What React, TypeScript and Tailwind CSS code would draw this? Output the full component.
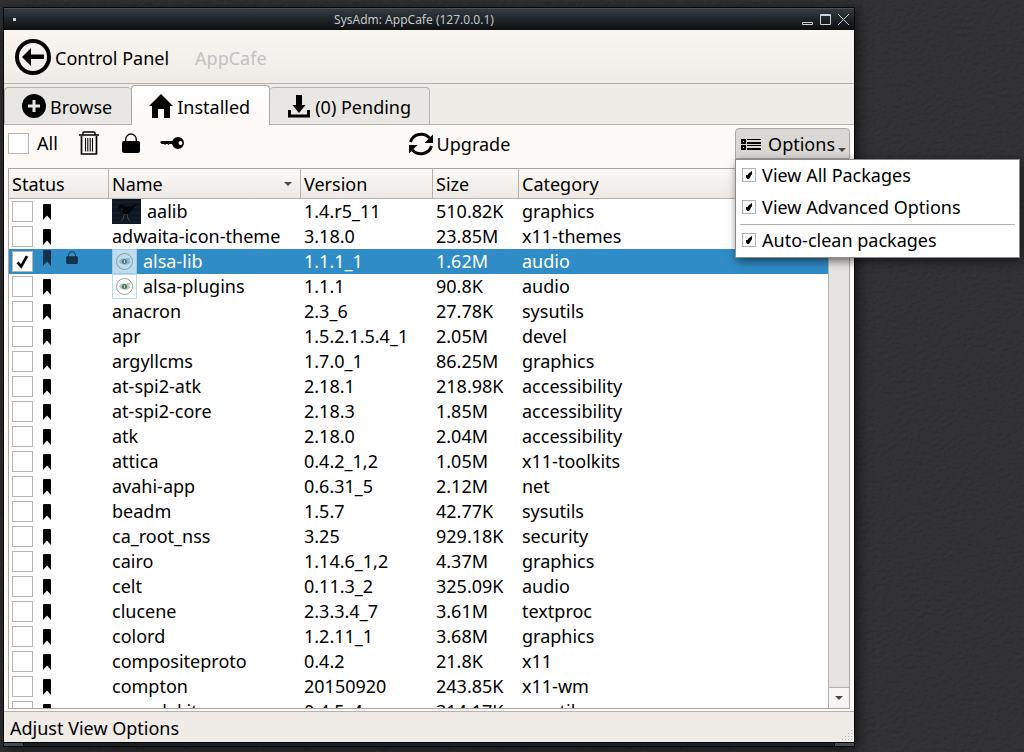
import React from "react";

type Pkg = {
  name: string;
  version: string;
  size: string;
  category: string;
  art?: "bird" | "alsa";
  locked?: boolean;
};

const packages: Pkg[] = [
  { name: "aalib", version: "1.4.r5_11", size: "510.82K", category: "graphics", art: "bird" },
  { name: "adwaita-icon-theme", version: "3.18.0", size: "23.85M", category: "x11-themes" },
  { name: "alsa-lib", version: "1.1.1_1", size: "1.62M", category: "audio", art: "alsa", locked: true },
  { name: "alsa-plugins", version: "1.1.1", size: "90.8K", category: "audio", art: "alsa" },
  { name: "anacron", version: "2.3_6", size: "27.78K", category: "sysutils" },
  { name: "apr", version: "1.5.2.1.5.4_1", size: "2.05M", category: "devel" },
  { name: "argyllcms", version: "1.7.0_1", size: "86.25M", category: "graphics" },
  { name: "at-spi2-atk", version: "2.18.1", size: "218.98K", category: "accessibility" },
  { name: "at-spi2-core", version: "2.18.3", size: "1.85M", category: "accessibility" },
  { name: "atk", version: "2.18.0", size: "2.04M", category: "accessibility" },
  { name: "attica", version: "0.4.2_1,2", size: "1.05M", category: "x11-toolkits" },
  { name: "avahi-app", version: "0.6.31_5", size: "2.12M", category: "net" },
  { name: "beadm", version: "1.5.7", size: "42.77K", category: "sysutils" },
  { name: "ca_root_nss", version: "3.25", size: "929.18K", category: "security" },
  { name: "cairo", version: "1.14.6_1,2", size: "4.37M", category: "graphics" },
  { name: "celt", version: "0.11.3_2", size: "325.09K", category: "audio" },
  { name: "clucene", version: "2.3.3.4_7", size: "3.61M", category: "textproc" },
  { name: "colord", version: "1.2.11_1", size: "3.68M", category: "graphics" },
  { name: "compositeproto", version: "0.4.2", size: "21.8K", category: "x11" },
  { name: "compton", version: "20150920", size: "243.85K", category: "x11-wm" },
  { name: "consolekit", version: "0.4.5_4", size: "314.17K", category: "sysutils" },
];

function Wallpaper() {
  return (
    <svg aria-hidden="true" className="pointer-events-none absolute inset-0 h-full w-full">
      <filter id="leather" x="0" y="0" width="100%" height="100%">
        <feTurbulence type="fractalNoise" baseFrequency="0.2 0.28" numOctaves="3" seed="7" result="n" />
        <feDiffuseLighting in="n" surfaceScale="0.45" lightingColor="#38393b">
          <feDistantLight azimuth="235" elevation="52" />
        </feDiffuseLighting>
      </filter>
      <rect width="100%" height="100%" filter="url(#leather)" />
    </svg>
  );
}

function BackIcon() {
  return (
    <svg width="36" height="36" viewBox="0 0 36 36" aria-hidden="true">
      <circle cx="18" cy="18" r="16" fill="none" stroke="#000" strokeWidth="4" />
      <path d="M7 18L16 9V15.500H29V20H16V27Z" />
    </svg>
  );
}

function PlusIcon() {
  return (
    <svg width="24" height="24" viewBox="0 0 24 24" aria-hidden="true">
      <circle cx="12" cy="12" r="12" />
      <path d="M12 6V18M6 12H18" stroke="#e8e7e4" strokeWidth="3" />
    </svg>
  );
}

function HomeIcon() {
  return (
    <svg width="24" height="24" viewBox="0 0 24 24" aria-hidden="true">
      <path d="M12 0L24 12H21V24H15V15H9V24H3V12H0Z" />
    </svg>
  );
}

function DownloadIcon() {
  return (
    <svg width="22" height="24" viewBox="0 0 22 24" aria-hidden="true">
      <path d="M8 1H14V11H17.500L11 19L4.500 11H8Z" />
      <path d="M0 16H3V20.500H19V16H22V23.500H0Z" />
    </svg>
  );
}

function TrashIcon() {
  return (
    <svg width="20" height="24" viewBox="0 0 20 24" fill="none" stroke="#000" aria-hidden="true">
      <path d="M0 4H20" strokeWidth="1.500" />
      <path d="M4 4V2Q4 1 5 1H15Q16 1 16 2V4" strokeWidth="1.500" />
      <path d="M2.500 5V23H17.500V5" strokeWidth="1.700" strokeLinejoin="round" />
      <path d="M6.500 7V20.500M8.800 7V20.500M11.200 7V20.500M13.500 7V20.500" strokeWidth="1.100" />
    </svg>
  );
}

function LockIcon({ className }: { className: string }) {
  return (
    <svg viewBox="0 0 18 20" className={className} aria-hidden="true">
      <path d="M3.700 10V6.500A5.300 5.500 0 0 1 14.300 6.500V10" fill="none" stroke="currentColor" strokeWidth="1.400" />
      <path d="M2 8H16Q18 8 18 10V17.500Q18 20 15.500 20H2.500Q0 20 0 17.500V10Q0 8 2 8Z" fill="currentColor" />
    </svg>
  );
}

function KeyIcon() {
  return (
    <svg width="24" height="14" viewBox="0 0 24 14" aria-hidden="true">
      <path d="M0 6L1.500 5H13V8H9.500L8.500 9L7.500 8H6L5 9L4 8H1.500Z" />
      <path
        fillRule="evenodd"
        d="M18 1A6 6 0 1 0 18 13A6 6 0 1 0 18 1ZM20.500 5A2 2 0 1 1 20.500 9A2 2 0 1 1 20.500 5Z"
      />
    </svg>
  );
}

function RefreshIcon() {
  return (
    <svg width="24" height="24" viewBox="0 0 24 24" aria-hidden="true">
      <path d="M1.500 10A11 10.500 0 0 1 20.500 6M22.500 14A11 10.500 0 0 1 3.500 18" fill="none" stroke="#000" strokeWidth="3" />
      <path d="M24 2.500V11H15.500Z" />
      <path d="M0 21.500V13H8.500Z" />
    </svg>
  );
}

function ListIcon() {
  return (
    <svg width="20" height="12" viewBox="0 0 20 12" shapeRendering="crispEdges" aria-hidden="true">
      <path d="M0 1H5V6H0ZM2 3V4H3V3ZM0 7H5V12H0ZM2 9V10H3V9Z" fillRule="evenodd" />
      <path d="M6 1H20V2H6ZM6 4H20V6H6ZM6 7H20V8H6ZM6 10H20V12H6Z" />
    </svg>
  );
}

function Bookmark({ dim }: { dim?: boolean }) {
  return (
    <svg
      width="8"
      height="16"
      viewBox="0 0 8 16"
      className={dim ? "mb-2 text-[#12314a]" : "text-black"}
      aria-hidden="true"
    >
      <path d="M0 1Q0 0 1 0H7Q8 0 8 1V16L4 11.500L0 16Z" fill="currentColor" />
    </svg>
  );
}

function Triangle({ className }: { className: string }) {
  return (
    <svg viewBox="0 0 8 4" className={className} aria-hidden="true">
      <path d="M0 0H8L4 4Z" fill="currentColor" />
    </svg>
  );
}

function BirdArt() {
  return (
    <svg width="29" height="25" viewBox="0 0 29 25" className="mr-1.5" aria-hidden="true">
      <rect width="29" height="25" fill="#0d1720" />
      <path d="M0 3H29M0 8H29M0 14H8M19 14H29M0 19H29M0 23H29" stroke="#172531" />
      <path d="M6 8L8 6L11 6L14 8L20 7L25 4L21 10L16 15L12 15L9 12Z" fill="#030405" />
      <path d="M8 9L11 10L10 12Z" fill="#5a2010" />
      <path d="M12.500 15L11 20L9 22M15 15L16 20L18 22" stroke="#51473c" fill="none" />
    </svg>
  );
}

function AlsaArt({ selected }: { selected?: boolean }) {
  return (
    <svg width="25" height="25" viewBox="0 0 25 25" className="mr-1.5" aria-hidden="true">
      <rect x=".5" y=".5" width="24" height="24" fill={selected ? "#bfdbed" : "#fff"} stroke={selected ? "#9fcbe2" : "#b4dde6"} />
      <circle cx="12.500" cy="12.500" r="8" fill="none" stroke={selected ? "#7d9fb0" : "#9aa3a1"} />
      <path d="M7 12Q9 8.500 13 9.500L18 9L17 12L19 13Q16 16.500 12 15.500Q8 15.500 7 12Z" fill={selected ? "#8fb5c0" : "#b5c8b8"} />
      <circle cx="12.500" cy="12.500" r="2.500" fill={selected ? "#4d7a8c" : "#58705f"} />
      <path d="M12.500 11V14" stroke="#c0d3cc" />
    </svg>
  );
}

const checkMark =
  "checked:bg-[url('data:image/svg+xml,%3Csvg%20xmlns=%22http://www.w3.org/2000/svg%22%20viewBox=%220%200%2021%2021%22%3E%3Cpath%20d=%22M5%2011.500L9%2016L15.500%204.500%22%20fill=%22none%22%20stroke=%22black%22%20stroke-width=%223%22/%3E%3C/svg%3E')]";

function Check({ label, checked }: { label: string; checked?: boolean }) {
  return (
    <input
      type="checkbox"
      aria-label={label}
      defaultChecked={checked}
      className={
        "block size-[21px] shrink-0 appearance-none border border-[#b9b5b2] bg-white bg-center bg-no-repeat " + checkMark
      }
    />
  );
}

function MenuItem({ children }: { children: string }) {
  return (
    <label className="flex h-8 items-center gap-1.5 px-1.5 pb-0.5">
      <input
        type="checkbox"
        defaultChecked
        className="size-3.5 shrink-0 appearance-none border border-[#b5b1ae] bg-white checked:bg-[url('data:image/svg+xml,%3Csvg%20xmlns=%22http://www.w3.org/2000/svg%22%20viewBox=%220%200%2012%2012%22%3E%3Cpath%20d=%22M3%206H4.500L6%204L9%202V5L6%2010H4L3%208Z%22/%3E%3C/svg%3E')]"
      />
      <span>{children}</span>
    </label>
  );
}

const th = "border-r border-b border-[#b5b1ae] pl-[3px] text-left font-normal";
const td = "p-0 pb-0.5 pl-[3px] leading-[22px]";

export default function App() {
  return (
    <div className="relative flex h-screen flex-col overflow-hidden bg-[#2f3032] pt-[7px] pr-[169px] pb-[5px] pl-[3px] font-['Noto_Sans',sans-serif] text-lg/6 text-black">
      <Wallpaper />
      <div className="relative flex min-h-0 flex-1 flex-col border border-[#08090a] bg-[#efebe7] shadow-[2px_2px_12px_#000000b0]">
        <header className="flex h-[22px] shrink-0 items-center border-t border-[#4a5258] bg-linear-to-b from-[#343b40] to-[#0d0f11] px-[9px] text-[#c3c6c8]">
          <span className="size-[3px] bg-[#d0d2d3]" />
          <h1 className="flex-1 pl-2.5 text-center text-xs/4 font-normal">SysAdm: AppCafe (127.0.0.1)</h1>
          <div className="-mr-1 flex gap-[7px]">
            <button aria-label="Minimize">
              <svg width="11" height="11" className="block" fill="none" stroke="#d0d2d3"><path d="M.5 8.500H10.500V10.500H.5Z" /></svg>
            </button>
            <button aria-label="Maximize">
              <svg width="11" height="11" className="block" fill="none" stroke="#d0d2d3"><path d="M.5 .5H10.500V10.500H.5ZM0 1.500H11" /></svg>
            </button>
            <button aria-label="Close">
              <svg width="11" height="11" className="block" fill="none" stroke="#d0d2d3"><path d="M0 0L11 11M11 0L0 11" /></svg>
            </button>
          </div>
        </header>

        <nav className="flex h-[54px] shrink-0 items-center gap-[26px] border-b border-[#b5b1ae] bg-linear-to-b from-[#f9f6f1] to-[#efebe7] pl-[11px]">
          <button className="flex items-center gap-1"><BackIcon /><span className="pt-0.5">Control Panel</span></button>
          <button disabled className="pt-0.5 text-[#c3c2c3]">AppCafe</button>
        </nav>

        <div className="flex h-[41px] shrink-0 items-end" role="tablist">
          <button role="tab" aria-selected="false" className="flex h-[38px] items-center gap-1 rounded-t-sm border-t border-b border-l border-[#b5b1ae] bg-[#e8e7e4] pr-[19px] pl-[17px]">
            <PlusIcon /><span className="pt-0.5">Browse</span>
          </button>
          <button role="tab" aria-selected="true" className="flex h-10 items-center gap-1 rounded-t-sm border border-b-0 border-[#aaa6a3] bg-linear-to-b from-white to-[#fdf9f6] pr-[19px] pl-[17px]">
            <HomeIcon /><span className="pt-0.5">Installed</span>
          </button>
          <button role="tab" aria-selected="false" className="flex h-[38px] items-center gap-[5px] rounded-t-sm border border-l-0 border-[#b5b1ae] bg-[#e8e7e4] pr-[18px] pl-[18px]">
            <DownloadIcon /><span className="pt-0.5">(0) Pending</span>
          </button>
          <span className="h-px flex-1 bg-[#b5b1ae]" />
        </div>

        <main className="flex min-h-0 flex-1 flex-col border-b border-[#b5b1ae] bg-[#fdf9f6] px-1 pb-0.5">
          <div className="flex h-[43px] shrink-0 items-start justify-between pt-[3px]">
            <div className="flex h-[30px] items-center">
              <label className="flex items-center gap-2"><Check label="All" />All</label>
              <button aria-label="Remove" className="ml-[21px]"><TrashIcon /></button>
              <button aria-label="Lock" className="ml-[23px]"><LockIcon className="h-5 w-[18px]" /></button>
              <button aria-label="Unlock" className="ml-5"><KeyIcon /></button>
            </div>
            <button className="flex h-8 items-center gap-1"><RefreshIcon />Upgrade</button>
            <div className="relative z-10">
              <button aria-haspopup="menu" aria-expanded="true" className="flex h-[31px] items-center gap-[7px] rounded-t-sm border border-[#aaa6a3] bg-[#dad8d5] pr-[3px] pl-[5px]">
                <ListIcon />
                <span className="flex items-center gap-[3px]">Options<Triangle className="mt-3 h-1 w-2 text-[#4a4846]" /></span>
              </button>
              <div className="absolute top-full left-0 w-[285px] border border-[#8e8b88] bg-white shadow-[2px_3px_9px_#00000090]">
                <MenuItem>View All Packages</MenuItem>
                <MenuItem>View Advanced Options</MenuItem>
                <hr className="mx-1 border-[#b5b1ae]" />
                <MenuItem>Auto-clean packages</MenuItem>
              </div>
            </div>
          </div>

          <div className="flex min-h-0 flex-1 border border-[#aaa6a3] bg-white">
            <div className="min-w-0 flex-1 overflow-hidden">
              <table className="w-full table-fixed border-separate border-spacing-0">
                <thead>
                  <tr className="h-[30px] bg-linear-to-b from-[#fbf9f6] to-[#ece8e4]">
                    <th className={th + " w-[100px]"}>Status</th>
                    <th className={th + " w-48"}>
                      <span className="flex items-center justify-between pr-2">Name<Triangle className="h-1 w-2 text-[#4a4846]" /></span>
                    </th>
                    <th className={th + " w-[132px]"}>Version</th>
                    <th className={th + " w-[86px]"}>Size</th>
                    <th className={th}>Category</th>
                  </tr>
                </thead>
                <tbody>
                  {packages.map((p) => (
                    <tr key={p.name} className={p.locked ? "h-[25px] bg-[#308cc6] text-white" : "h-[25px]"}>
                      <td className="p-0 pl-[3px]">
                        <div className="flex h-[25px] items-center">
                          <Check label={"Select " + p.name} checked={p.locked} />
                          <span className="ml-2.5"><Bookmark dim={p.locked} /></span>
                          {p.locked && <LockIcon className="mb-2 ml-[15px] h-[13px] w-3 text-[#12314a]" />}
                        </div>
                      </td>
                      <td className="p-0 pl-[3px]">
                        <div className="flex h-[25px] items-center whitespace-nowrap">
                          {p.art === "bird" && <BirdArt />}
                          {p.art === "alsa" && <AlsaArt selected={p.locked} />}
                          <span className="pb-0.5 leading-[22px]">{p.name}</span>
                        </div>
                      </td>
                      <td className={td}>{p.version}</td>
                      <td className={td}>{p.size}</td>
                      <td className={td}>{p.category}</td>
                    </tr>
                  ))}
                </tbody>
              </table>
            </div>
            <div className="flex w-[21px] flex-col border-l border-[#b5b1ae] bg-[#e7e3e0]">
              <div className="flex-1" />
              <button aria-label="Scroll down" className="grid h-[21px] place-items-center border-t border-[#b5b1ae] bg-[#f7f5f3]">
                <Triangle className="h-1 w-2 text-[#4a4846]" />
              </button>
            </div>
          </div>
        </main>

        <footer className="flex h-[30px] shrink-0 items-center justify-between pl-1.5">
          <span className="pt-0.5">Adjust View Options</span>
          <svg width="12" height="12" className="self-end" fill="#b5b1ae" aria-hidden="true">
            <path d="M9 0h1v1h-1zM6 3h1v1h-1zM9 3h1v1h-1zM3 6h1v1h-1zM6 6h1v1h-1zM9 6h1v1h-1zM0 9h1v1h-1zM3 9h1v1h-1zM6 9h1v1h-1zM9 9h1v1h-1z" />
          </svg>
        </footer>
        <div className="flex h-1 shrink-0 justify-between border-t border-black bg-[#1d2124]">
          <span className="w-5 border-r border-black bg-[#454c51]" />
          <span className="w-5 border-l border-black bg-[#454c51]" />
        </div>
      </div>
    </div>
  );
}
